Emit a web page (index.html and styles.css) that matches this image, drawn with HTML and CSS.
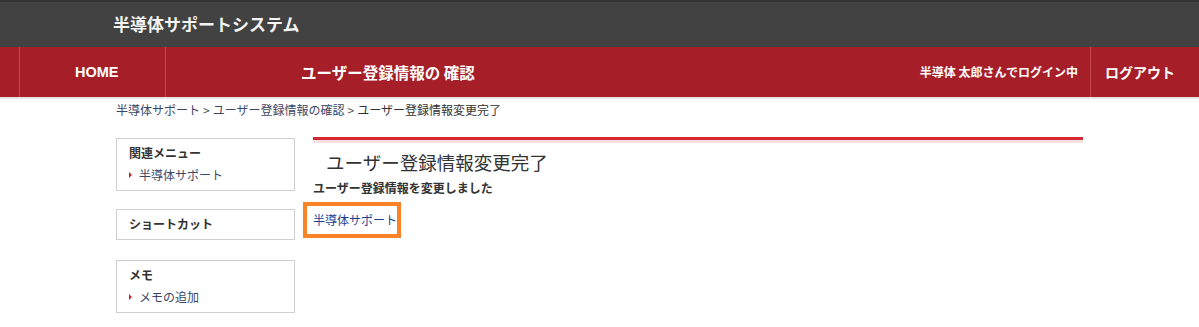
FILE: index.html
```html
<!DOCTYPE html>
<html lang="ja">
<head>
<meta charset="utf-8">
<title>ユーザー登録情報変更完了</title>
<link rel="stylesheet" href="styles.css">
</head>
<body>
<header class="site-header">
  <div class="site-title">半導体サポートシステム</div>
</header>
<nav class="global-nav">
  <a class="nav-item nav-home" href="#">HOME</a>
  <a class="nav-item nav-page" href="#">ユーザー登録情報の 確認</a>
  <div class="nav-spacer"></div>
  <div class="nav-user">半導体 太郎さんでログイン中</div>
  <a class="nav-item nav-logout" href="#">ログアウト</a>
</nav>
<div class="container">
  <div class="breadcrumb">
    <a href="#">半導体サポート</a><span class="sep">&gt;</span><a href="#">ユーザー登録情報の確認</a><span class="sep">&gt;</span><span class="current">ユーザー登録情報変更完了</span>
  </div>
  <div class="layout">
    <aside class="sidebar">
      <div class="side-box">
        <div class="side-title">関連メニュー</div>
        <a class="side-link" href="#">半導体サポート</a>
      </div>
      <div class="side-box side-box-gap">
        <div class="side-title">ショートカット</div>
      </div>
      <div class="side-box">
        <div class="side-title">メモ</div>
        <a class="side-link" href="#">メモの追加</a>
      </div>
    </aside>
    <main class="main">
      <h1 class="page-title">ユーザー登録情報変更完了</h1>
      <p class="message">ユーザー登録情報を変更しました</p>
      <a class="focus-link" href="#">半導体サポート</a>
    </main>
  </div>
</div>
</body>
</html>
```

FILE: styles.css
```css
* {
  box-sizing: border-box;
}

html, body {
  margin: 0;
  padding: 0;
  background: #ffffff;
}

body {
  font-family: "Noto Sans CJK JP", "Liberation Sans", sans-serif;
  color: #333333;
  font-size: 12px;
  line-height: 16px;
}

a {
  text-decoration: none;
}

.site-header {
  height: 47px;
  background: #424242;
  border-top: 2px solid #343434;
  display: flex;
  align-items: center;
  padding-left: 113px;
}

.site-title {
  color: #f4f4f4;
  font-size: 17px;
  font-weight: bold;
  line-height: 22px;
  margin-top: -2px;
}

.global-nav {
  height: 52px;
  background: #a61e27;
  border-bottom: 2px solid #e6e6e6;
  display: flex;
  align-items: stretch;
  padding-left: 19px;
}

.nav-item {
  display: flex;
  align-items: center;
  color: #ffffff;
  font-weight: bold;
  border-left: 1px solid #c4494f;
}

.nav-home {
  width: 146px;
  padding-left: 55px;
  font-family: "Liberation Sans", "Noto Sans CJK JP", sans-serif;
  font-size: 14.5px;
}

.nav-page {
  padding-left: 135px;
  font-size: 15.5px;
}

.nav-spacer {
  flex: 1;
}

.nav-user {
  display: flex;
  align-items: center;
  color: #ffffff;
  font-weight: bold;
  font-size: 12px;
  padding-right: 12px;
}

.nav-logout {
  width: 109px;
  padding-left: 14px;
  font-size: 14px;
}

.container {
  width: 967px;
  margin: 0 auto;
}

.breadcrumb {
  padding-top: 3px;
  line-height: 16px;
  font-size: 12px;
  white-space: nowrap;
}

.breadcrumb a {
  color: #3b4766;
}

.breadcrumb .sep {
  color: #555555;
  margin: 0 3px;
}

.breadcrumb .current {
  color: #333333;
}

.layout {
  display: flex;
  gap: 18px;
  margin-top: 19px;
}

.sidebar {
  width: 179px;
  flex: none;
  margin-top: 1px;
}

.side-box {
  border: 1px solid #cfcfcf;
  padding: 6px 12px 7px;
  margin-bottom: 18px;
}

.side-box-gap {
  margin-bottom: 20px;
}

.side-title {
  font-weight: bold;
  color: #333333;
  line-height: 16px;
}

.side-link {
  display: flex;
  align-items: center;
  margin-top: 6px;
  color: #3b4766;
  line-height: 16px;
}

.side-link::before {
  content: "";
  display: block;
  width: 0;
  height: 0;
  border-left: 3px solid #c1272d;
  border-top: 3px solid transparent;
  border-bottom: 3px solid transparent;
  margin-right: 7px;
}

.main {
  flex: none;
  width: 770px;
}

.page-title {
  margin: 0;
  border-top: 3px solid #d52833;
  box-shadow: inset 0 3px 0 #f5dfe0;
  padding: 10px 0 0 13px;
  font-size: 18.5px;
  font-weight: normal;
  line-height: 24px;
  color: #333333;
}

.message {
  margin: 6px 0 0;
  font-weight: bold;
  line-height: 16px;
}

.focus-link {
  display: inline-block;
  margin: 6px 0 0 -10px;
  border: 4px solid #f98326;
  padding: 6px 0 6px 6px;
  color: #1c3f94;
  line-height: 16px;
}
```
